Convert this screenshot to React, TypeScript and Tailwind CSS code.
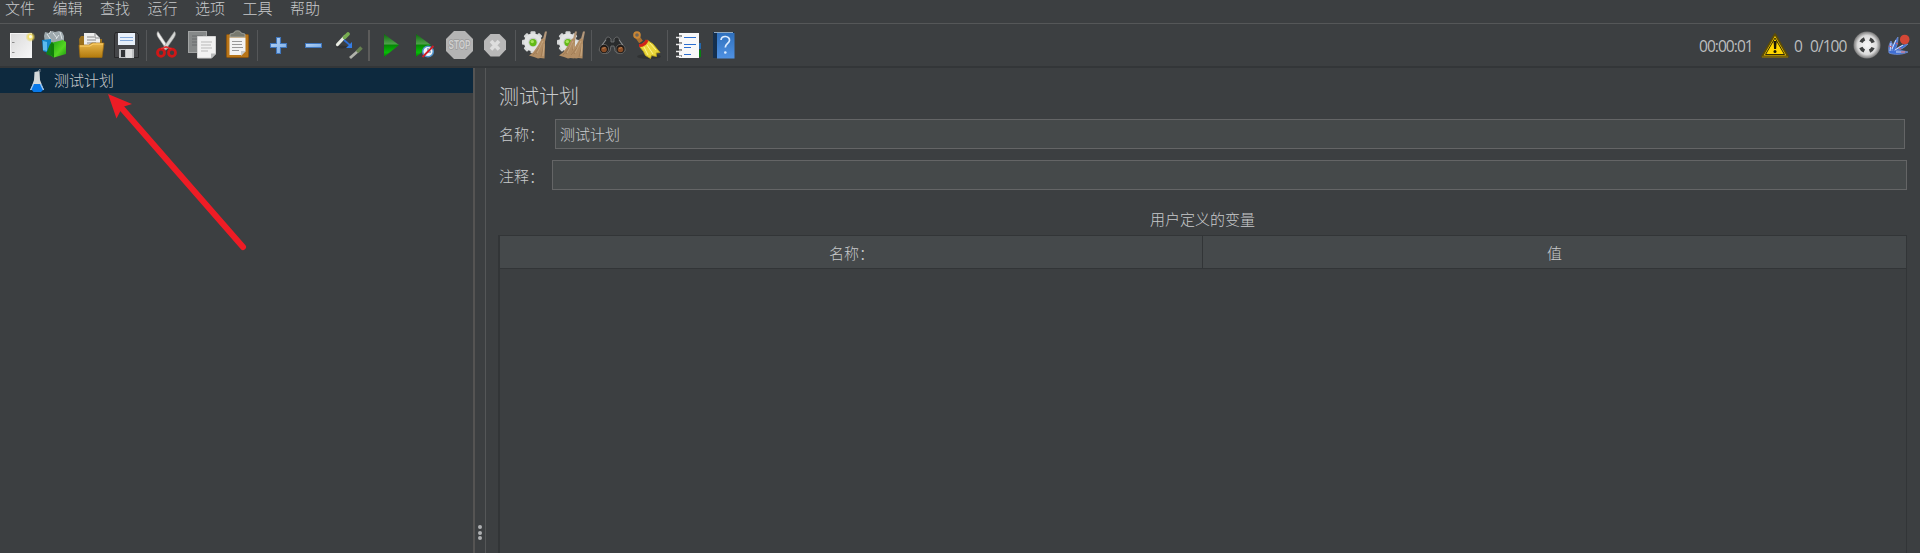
import type { ReactNode } from "react";

const MENUS = ["文件", "编辑", "查找", "运行", "选项", "工具", "帮助"];

function Slot({ x, w, label, children }: { x: number; w: number; label: string; children: ReactNode }) {
  return (
    <svg width={w} height={42} viewBox={`${x} 24 ${w} 42`} aria-label={label} className="block shrink-0">
      {children}
    </svg>
  );
}

function Divider() {
  return <div className="h-[31px] w-px shrink-0 bg-[#555759]" />;
}

function Gear({ cx }: { cx: number }) {
  return (
    <g>
      {[0, 45, 90, 135].map((a) => (
        <rect key={a} x={cx - 2.5} y={31.3} width={5} height={22} rx={1} fill="#d5d7d7" transform={`rotate(${a} ${cx} 42.3)`} />
      ))}
      <circle cx={cx} cy={42.3} r={9} fill="#e2e4e4" />
      <circle cx={cx} cy={42.3} r={4.6} fill="#c5cbc4" />
      <circle cx={cx} cy={42.6} r={3.6} fill="#62ba16" />
      <circle cx={cx - 0.7} cy={41.6} r={1.7} fill="#a7e45d" />
    </g>
  );
}

function Broom({ x }: { x: number }) {
  return (
    <g>
      <path d={`M${x + 15} 31.5h2l-2 10-2.600-.6z`} fill="#b3977a" />
      <path d={`M${x + 12} 38.500l3 .5v8l-.5 11.500-4-.5-2.500.5-4-1.500-5-1.500 4-3 5-7z`} fill="#b28d64" />
      <path d={`M${x + 12} 43l-6 11m8-10l-3 13m-2-9l-6 7`} stroke="#8f6b47" strokeWidth={0.5} fill="none" />
      <path d={`M${x + 13} 41l-6 12m7-9l-1 12`} stroke="#d2b48e" strokeWidth={0.700} fill="none" />
    </g>
  );
}

function Gradients() {
  return (
    <svg width={0} height={0} className="absolute">
      <defs>
        <linearGradient id="paper" x1="0" y1="0" x2="1" y2="1"><stop offset="0" stopColor="#d9d9d9" /><stop offset="1" stopColor="#f7f7f7" /></linearGradient>
        <linearGradient id="gold" x1="0" y1="0" x2="0" y2="1"><stop offset="0" stopColor="#e8b64c" /><stop offset="1" stopColor="#b27a0c" /></linearGradient>
        <linearGradient id="green" x1="0" y1="0" x2="0" y2="1"><stop offset="0" stopColor="#0b6b0b" /><stop offset=".42" stopColor="#4c9e49" /><stop offset=".5" stopColor="#058a05" /><stop offset=".8" stopColor="#08bc08" /><stop offset="1" stopColor="#067a06" /></linearGradient>
        <linearGradient id="blue" x1="0" y1="0" x2="1" y2="1"><stop offset="0" stopColor="#b9d6f6" /><stop offset="1" stopColor="#7aabe4" /></linearGradient>
        <linearGradient id="book" x1="0" y1="0" x2="0" y2="1"><stop offset="0" stopColor="#2f70bd" /><stop offset="1" stopColor="#4f91e2" /></linearGradient>
        <linearGradient id="cube" x1="0" y1="0" x2="1" y2="1"><stop offset="0" stopColor="#1c9e12" /><stop offset=".6" stopColor="#55d622" /><stop offset="1" stopColor="#1b9410" /></linearGradient>
        <radialGradient id="ball"><stop offset="0" stopColor="#f8f8f8" /><stop offset=".7" stopColor="#dcdcdc" /><stop offset="1" stopColor="#777" /></radialGradient>
        <radialGradient id="glow"><stop offset="0" stopColor="#fffbd0" /><stop offset=".45" stopColor="#f0dc63" /><stop offset="1" stopColor="#e2cc50" stopOpacity="0" /></radialGradient>
      </defs>
    </svg>
  );
}

function Toolbar() {
  return (
    <div className="flex h-[42px] shrink-0 items-center">
      <Slot x={0} w={38} label="新建">
        <rect x={10.5} y={33.5} width={21} height={24} fill="url(#paper)" stroke="#f4f4f4" />
        <path d="M12 42.5h2.500M12 52.500h2.500" stroke="#8b8b8b" />
        <circle cx={30.500} cy={37} r={5} fill="url(#glow)" />
        <circle cx={30.500} cy={36.500} r={1.500} fill="#fffbe0" />
      </Slot>
      <Slot x={38} w={34} label="模板">
        <path d="M44 36l1-4 4 1 3-2 3 1 4-1 3 1 2 4v7H45z" fill="#9ea9ad" />
        <path d="M47 34l4 6m2-7l4 5m3-6l2 7m-13-5l2-3m8 4l-3 4" stroke="#e0e6e8" strokeWidth={1} />
        <path d="M42 40l9-1v15l-8-3z" fill="#1687c9" />
        <path d="M43 41l4 1v9l-4-1z" fill="#5cbcf0" />
        <path d="M46 54l7 3V42l-3 2z" fill="#127e18" />
        <path d="M51 43l12-3 3 2v12l-12 3.500-3-2.500z" fill="url(#cube)" />
        <path d="M51 42v13l3 3V44z" fill="#107c0c" />
      </Slot>
      <Slot x={72} w={36} label="打开">
        <path d="M79 39l2-3h5l2 3h14v17H80z" fill="#99701f" />
        <path d="M84 33h11l5 5v10H84z" fill="#eee" />
        <path d="M87 37h7m-7 3h9m-9 3h9M95 33v5h5" stroke="#888" strokeWidth={1} fill="none" />
        <path d="M79 45h10l3-2h12l-2 14.500H80z" fill="url(#gold)" stroke="#9e6c10" strokeWidth={0.7} />
        <path d="M80 46h10l3-2h10" fill="none" stroke="#ffd36f" strokeWidth={1} />
      </Slot>
      <Slot x={108} w={38} label="保存">
        <path d="M114.500 34.500l1-2h21l2 2v23h-24z" fill="#454649" stroke="#272729" />
        <rect x={118} y={33} width={17} height={12} fill="#e8f0fa" />
        <path d="M120 37.500h13m-13 3h13" stroke="#85aadb" />
        <rect x={119} y={49} width={15} height={9} fill="#bfc1c3" />
        <rect x={121} y={50} width={4} height={7} fill="#303235" />
        <path d="M126 49h6v9h-6z" fill="#dedfe0" />
      </Slot>
      <Divider />
      <Slot x={147} w={37} label="剪切">
        <path d="M158 31.500c-2 2-.5 5 1 7l7.500 11 2-2z" fill="#f0f0ee" stroke="#aaa" strokeWidth={0.6} />
        <path d="M174.500 31.500c2 2 .5 5-1 7L165 50.500l-2-2.500z" fill="#d4d6d4" stroke="#969696" strokeWidth={0.6} />
        <ellipse cx={161} cy={52.800} rx={3.500} ry={3.600} fill="none" stroke="#cf1717" strokeWidth={2.800} />
        <ellipse cx={172} cy={52.800} rx={3.500} ry={3.600} fill="none" stroke="#cf1717" strokeWidth={2.800} />
        <path d="M161 48.500c3 0 4-2 5.500-1.500s2 1.500 5 1.500" fill="none" stroke="#e42c2c" strokeWidth={1.700} />
      </Slot>
      <Slot x={184} w={36} label="复制">
        <rect x={188.500} y={31.500} width={18} height={21} fill="#868989" stroke="#a2a4a4" />
        <path d="M192 36h11m-11 3h7m-7 3h6m-6 3h5" stroke="#696b6c" />
        <path d="M197.500 36.500h18V54l-4 4h-14z" fill="#f2f2f2" stroke="#d4d4d4" />
        <path d="M201 42h11m-11 3h10m-10 3h11m-11 3h7" stroke="#b9b9b9" />
        <path d="M211 58.500v-5h5z" fill="#b7b9ba" />
      </Slot>
      <Slot x={220} w={37} label="粘贴">
        <rect x={226.500} y={34.500} width={22} height={23} rx={1} fill="#b87518" stroke="#8a5410" />
        <path d="M229.500 37.500h16V51l-4 4h-12z" fill="#f3f3f3" />
        <path d="M232 41.500h10m-10 3h10m-10 3h11m-11 3h7" stroke="#999" />
        <path d="M241 56v-5h5z" fill="#c8cacb" />
        <path d="M230 37v-3l4-1c0-3 7-3 7 0l4 1v3z" fill="#77796f" stroke="#b0b2aa" strokeWidth={0.700} />
      </Slot>
      <Divider />
      <Slot x={258} w={38} label="展开">
        <path d="M276.500 37.500h4v6h6v4h-6v6h-4v-6h-6v-4h6z" fill="url(#blue)" stroke="#3f76bd" strokeWidth={1.100} />
      </Slot>
      <Slot x={296} w={34} label="折叠">
        <rect x={305.500} y={43.500} width={16} height={4} fill="url(#blue)" stroke="#3f76bd" />
      </Slot>
      <Slot x={330} w={38} label="切换">
        <ellipse cx={342} cy={47} rx={6} ry={1.500} fill="#303234" />
        <path d="M337.500 44.500l7.500-8" stroke="#e9ece3" strokeWidth={3.200} strokeLinecap="round" />
        <path d="M344.500 37.500l3.500-3.500" stroke="#78ad51" strokeWidth={3.800} strokeLinecap="round" />
        <path d="M344 40l7 6" stroke="#2f70d5" strokeWidth={1.800} />
        <path d="M352 42v6h-6z" fill="#347de5" />
        <path d="M350 58l8-7" stroke="#b1b3ab" strokeWidth={2.800} />
        <path d="M357 52l4.500-4.500" stroke="#66814f" strokeWidth={3.500} />
      </Slot>
      <div className="h-[31px] w-[2px] shrink-0 bg-[#5c5c5b]" />
      <Slot x={370} w={38} label="启动">
        <path d="M384 34l15 11-15 12z" fill="url(#green)" />
      </Slot>
      <Slot x={408} w={34} label="不停顿开始">
        <path d="M416 34l15 11-15 12z" fill="url(#green)" />
        <circle cx={428} cy={51.500} r={5.300} fill="#eef5fb" stroke="#4f91ca" strokeWidth={1.500} />
        <path d="M428 48v4h3" stroke="#376ba0" fill="none" />
        <path d="M422.500 57l11-11" stroke="#d11f25" strokeWidth={1.800} />
      </Slot>
      <Slot x={442} w={36} label="停止">
        <path d="M454 31h11l8 8v12l-8 8h-11l-8-8V39z" fill="#b4b4b4" />
        <text x={459.500} y={49.300} textAnchor="middle" textLength={22} lengthAdjust="spacingAndGlyphs" fill="#cfcfcf" stroke="#999999" strokeWidth={1.400} paintOrder="stroke" className="font-['Liberation_Sans'] text-[12px] font-bold">STOP</text>
      </Slot>
      <Slot x={478} w={37} label="关闭">
        <path d="M490.500 34h9l6.500 6.500v9l-6.500 7h-9l-6.500-7v-9z" fill="#b8b8b8" />
        <path d="M491 41l8 8.500m0-8.500l-8 8.500" stroke="#dedede" strokeWidth={3.600} />
      </Slot>
      <Divider />
      <Slot x={516} w={38} label="清除">
        <Gear cx={533} />
        <Broom x={530} />
      </Slot>
      <Slot x={554} w={37} label="清除全部">
        <Gear cx={568} />
        <Broom x={560} />
        <Broom x={568} />
      </Slot>
      <Divider />
      <Slot x={592} w={36} label="搜索">
        <path d="M606 39c0-2 3-3 5 0v3h3v-3c2-3 5-2 5 0l6 11c-1 4-8 5-10 1l-1-5h-3l-1 5c-2 4-9 3-11-1z" fill="#292b2c" stroke="#77797a" strokeWidth={0.800} />
        <circle cx={604} cy={49} r={4.600} fill="#1e1a18" stroke="#6c6c6a" strokeWidth={0.800} />
        <circle cx={620.500} cy={49} r={4.600} fill="#1e1a18" stroke="#6c6c6a" strokeWidth={0.800} />
        <circle cx={604} cy={49.500} r={2.800} fill="#8a4e27" />
        <circle cx={620.500} cy={49.500} r={2.800} fill="#8a4e27" />
        <path d="M606 40l-4 5m17-5l4 5" stroke="#8d9092" strokeWidth={1} />
        <path d="M602.500 48.500l3-1m13.500 1l3-1" stroke="#c98d5b" strokeWidth={0.800} />
      </Slot>
      <Slot x={628} w={39} label="重置搜索">
        <ellipse cx={649} cy={56.500} rx={12} ry={2.500} fill="#2b2d2e" opacity={0.700} />
        <path d="M637.500 37l3.500 5" stroke="#a8702f" strokeWidth={4.500} />
        <circle cx={637} cy={35} r={2.800} fill="#6e655a" stroke="#c98634" strokeWidth={2} />
        <path d="M639.500 46.500l7.500-6.500 6 4 7 8.500-4 .5 .5 3.500-5-1-1 3-5-3-2-4z" fill="#e9d63a" stroke="#c2ab18" strokeWidth={0.800} />
        <path d="M644 47l4 8m-1-10l6 9m-3-11l6 7" stroke="#fff48c" />
        <path d="M639 45.500c4 0 7-2 8-5.500" stroke="#d02319" strokeWidth={3} fill="none" />
      </Slot>
      <Divider />
      <Slot x={668} w={38} label="函数助手">
        <rect x={698} y={43} width={3} height={6} fill="#2368ac" />
        <rect x={698} y={50} width={3} height={7} fill="#087f13" />
        <path d="M679 33h20v25h-20z" fill="#f8f8f8" />
        <path d="M677 36h5m-5 7h5m-5 7h5m-5 6h5" stroke="#25282a" strokeWidth={1} />
        <path d="M676 37.500h5m-5 7h5m-5 7h5m-5 5h5" stroke="#e9e9e9" strokeWidth={1.700} />
        <path d="M684 37.500h12m-12 7h12m-12 3h7m-7 7h7" stroke="#2b6ed0" strokeWidth={1.200} />
      </Slot>
      <Slot x={706} w={36} label="帮助">
        <rect x={713} y={32} width={21} height={26} fill="#142f4e" />
        <rect x={717} y={33} width={17.500} height={25.500} fill="url(#book)" />
        <path d="M714 32.500h19" stroke="#8ea8c2" />
        <path d="M721 40c.5-5 9-4.500 8.500.5-.3 3-4.200 3-4.200 7" fill="none" stroke="#dcecff" strokeWidth={1.700} />
        <circle cx={725.300} cy={52.500} r={1.300} fill="#dcecff" />
      </Slot>
      <div className="ml-auto flex h-full items-center font-['Open_Sans','Noto_Sans',sans-serif] text-[15.500px] font-normal leading-[42px] tracking-[-0.950px] text-[#bbbdbf]">
        <span className="w-[62px] whitespace-nowrap pl-px pt-[2px]">00:00:01</span>
        <Slot x={1760} w={34} label="警告">
          <path d="M1775 34l13 22.500h-26z" fill="#f3c700" stroke="#5c4b05" strokeWidth={1.800} strokeLinejoin="round" />
          <path d="M1775 38l9.500 16.500h-19z" fill="#ffd600" stroke="#312b0a" strokeWidth={1} />
          <path d="M1762 57h26" stroke="#967b13" />
          <path d="M1773.500 41h3.200l-.6 8h-2z" fill="#171608" />
          <circle cx={1775} cy={51.500} r={1.500} fill="#171608" />
        </Slot>
        <span className="w-4 whitespace-nowrap pt-[2px]">0</span>
        <span className="w-[41px] whitespace-nowrap pt-[2px]">0/100</span>
        <Slot x={1851} w={33} label="远程">
          <circle cx={1867} cy={45} r={13.500} fill="url(#ball)" />
          <circle cx={1867} cy={45} r={6.600} fill="none" stroke="#3e4040" strokeWidth={3.500} strokeDasharray="5 5.367" strokeDashoffset={-2.700} />
        </Slot>
        <Slot x={1884} w={36} label="JMeter">
          <path d="M1889 53c-1-5 0-9 2-12 2 3 2 7 1 10 0-6 3-10 6-14 0 6-1 10-4 14 3-4 8-6 14-7-4 4-8 6-12 7 4-1 8 0 12 1-6 3-14 3-19 1z" fill="#3f6ed2" stroke="#7896da" strokeWidth={0.700} />
          <path d="M1891 43l-1 8m6-11l-4 9m11-4l-8 5m10 2h-9" stroke="#d3dff8" strokeWidth={1} />
          <path d="M1889 46l3 1m4-4l2 1m1 4l2 1m0 3h4" stroke="#cf5b63" strokeWidth={1.200} />
          <circle cx={1904.700} cy={39.500} r={4.800} fill="#d44736" />
        </Slot>
      </div>
    </div>
  );
}

export default function App() {
  return (
    <div className="relative flex h-[553px] w-[1920px] flex-col overflow-hidden bg-[#3c3f41] font-['Liberation_Sans','Noto_Sans_CJK_SC',sans-serif] text-[15px] font-light text-[#c8cacc]">
      <Gradients />
      <nav className="flex h-[23px] shrink-0 gap-[17.500px] pl-[5px] leading-[18px]">
        {MENUS.map((m) => (
          <span key={m} className="w-[30px] whitespace-nowrap">{m}</span>
        ))}
      </nav>
      <div className="h-px shrink-0 bg-[#555758]" />
      <Toolbar />
      <div className="h-[2px] shrink-0 bg-[#333638]" />
      <div className="flex min-h-0 flex-1">
        <aside className="w-[473px] shrink-0">
          <div className="flex h-[25px] items-center bg-[#0d293e] pl-[29px]">
            <svg width={16} height={25} viewBox="0 0 16 25" className="shrink-0">
              <path d="M5.500 4l5-1 .5 9 4 10H1.500l3.500-10z" fill="#d4d8d9" />
              <path d="M9 3l2-2v3" stroke="#6c7b86" fill="none" />
              <path d="M4 16h8.500l2 5.500-2.500 2.500H4.500L2 21z" fill="#0878e8" />
              <path d="M1.500 22l3-6m10 6l-3-6" stroke="#a9c9e9" strokeWidth={1.200} />
            </svg>
            <span className="ml-[9px] leading-[25px]">测试计划</span>
          </div>
        </aside>
        <div className="w-[2px] shrink-0 bg-[#555453]" />
        <div className="flex w-[10px] shrink-0 flex-col items-center justify-end gap-[1.500px] pb-[13px] pr-px">
          <i className="size-1 rounded-full bg-[#afb1b3]" />
          <i className="size-1 rounded-full bg-[#afb1b3]" />
          <i className="size-1 rounded-full bg-[#afb1b3]" />
        </div>
        <div className="w-px shrink-0 bg-[#555758]" />
        <main className="flex min-w-0 flex-1 flex-col pl-3 pt-[14px]">
          <h1 className="ml-px h-[28px] font-['Noto_Sans_CJK_SC',sans-serif] text-[20px] font-light leading-[27px]">测试计划</h1>
          <div className="ml-[2px] mt-[9px] flex h-[30px] items-center">
            <label className="-ml-px w-[56px] pt-[2px]">名称：</label>
            <div className="h-[30px] w-[1350px] border border-[#646566] bg-[#45494a] pl-1 leading-[29px]">测试计划</div>
          </div>
          <div className="ml-[2px] mt-[11px] flex h-[30px] items-center">
            <label className="-ml-px w-[53px] pt-[4px]">注释：</label>
            <div className="h-[30px] w-[1355px] border border-[#646566] bg-[#45494a]" />
          </div>
          <div className="mt-[20px] w-[1409px] text-center leading-[20px]">用户定义的变量</div>
          <div className="mt-[5px] flex w-[1409px] flex-1 flex-col border-l-2 border-r border-t border-[#323537]">
            <div className="flex h-[33px] border-b border-[#323537] bg-[#45494b] text-center leading-[35px]">
              <div className="w-[703px] border-r border-[#323537] pl-px">名称：</div>
              <div className="flex-1">值</div>
            </div>
          </div>
        </main>
      </div>
      <svg width={150} height={170} viewBox="100 85 150 170" className="pointer-events-none absolute left-[100px] top-[85px]">
        <path d="M122 108.500L243 247" stroke="#ee1c25" strokeWidth={6} strokeLinecap="round" />
        <path d="M108 94l24 10-9.500 3-6 11.500z" fill="#ee1c25" />
      </svg>
    </div>
  );
}
